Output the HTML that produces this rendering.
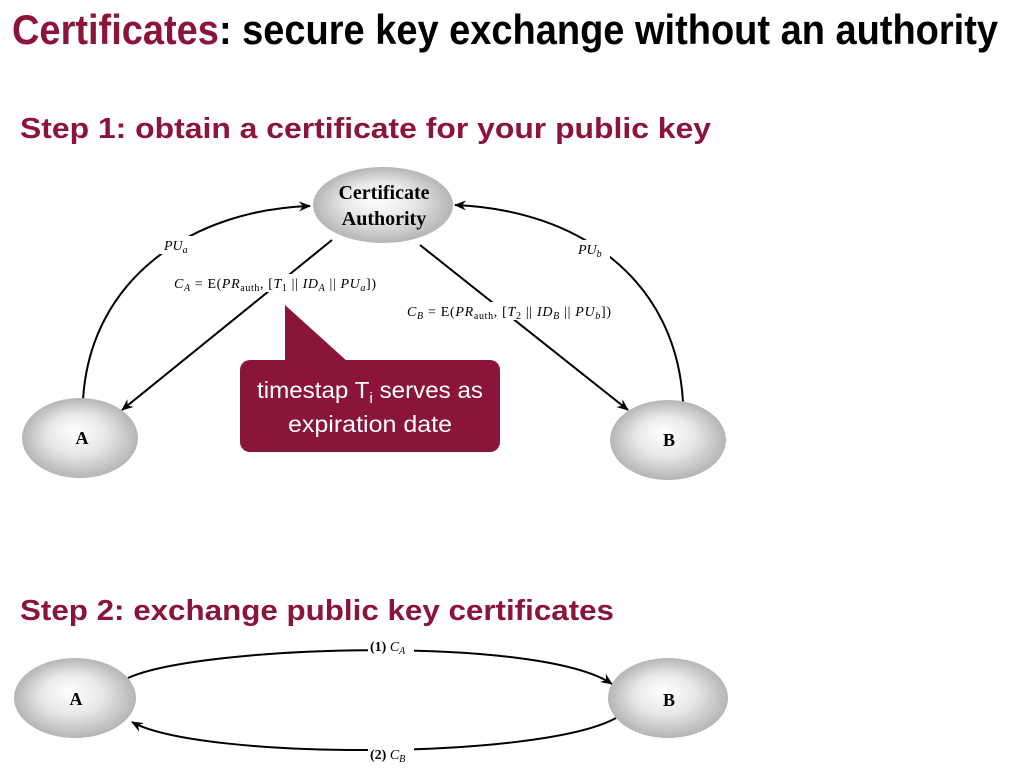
<!DOCTYPE html>
<html><head><meta charset="utf-8"><style>
html,body{margin:0;padding:0;background:#fff;width:1011px;height:772px;overflow:hidden}
svg{display:block}
</style></head><body>
<svg width="1011" height="772" viewBox="0 0 1011 772" xmlns="http://www.w3.org/2000/svg">
<defs>
<radialGradient id="g" cx="0.5" cy="0.5" r="0.5" fx="0.45" fy="0.4">
<stop offset="0" stop-color="#ffffff"/><stop offset="0.5" stop-color="#e8e8e8"/><stop offset="1" stop-color="#b5b5b5"/>
</radialGradient>
<marker id="ar" markerWidth="12" markerHeight="10" refX="11" refY="5" orient="auto" markerUnits="userSpaceOnUse">
<path d="M0,0 L12,5 L0,10 L4,5 Z" fill="#000"/>
</marker>
</defs>
<g font-family="Liberation Sans, sans-serif" font-weight="bold">
<text x="12" y="44" font-size="42" textLength="986" lengthAdjust="spacingAndGlyphs"><tspan fill="#8b1538">Certificates</tspan><tspan fill="#000">: secure key exchange without  an authority</tspan></text>
<text x="20" y="138" font-size="29" fill="#8b1538" textLength="691" lengthAdjust="spacingAndGlyphs">Step 1: obtain a certificate for your public key</text>
<text x="20" y="620" font-size="29" fill="#8b1538" textLength="594" lengthAdjust="spacingAndGlyphs">Step 2: exchange public key certificates</text>
</g>
<g fill="none" stroke="#000" stroke-width="2">
<path d="M83,400 C90,280 190,210 310,206" marker-end="url(#ar)"/>
<path d="M683,402 C676,280 580,210 455,205" marker-end="url(#ar)"/>
<path d="M332,240 L122,410" marker-end="url(#ar)"/>
<path d="M420,245 L628,410" marker-end="url(#ar)"/>
<path d="M128,678 C200,645 540,635 612,684" marker-end="url(#ar)"/>
<path d="M616,718 C540,760 200,760 132,722" marker-end="url(#ar)"/>
</g>
<g font-family="Liberation Serif, serif" font-style="italic" font-size="14">
<rect x="160" y="236" width="40" height="18" fill="#fff"/>
<text x="164" y="250">PU<tspan font-size="10" dy="3">a</tspan></text>
<rect x="574" y="240" width="36" height="18" fill="#fff"/>
<text x="578" y="254">PU<tspan font-size="10" dy="3">b</tspan></text>
<rect x="172" y="274" width="206" height="18" fill="#fff"/>
<text x="174" y="288" textLength="202" lengthAdjust="spacing">C<tspan font-size="10" dy="3">A</tspan><tspan dy="-3" font-style="normal"> = E(</tspan>PR<tspan font-size="10" dy="3" font-style="normal">auth</tspan><tspan dy="-3" font-style="normal">, [</tspan>T<tspan font-size="10" dy="3" font-style="normal">1</tspan><tspan dy="-3" font-style="normal"> || </tspan>ID<tspan font-size="10" dy="3">A</tspan><tspan dy="-3" font-style="normal"> || </tspan>PU<tspan font-size="10" dy="3">a</tspan><tspan dy="-3" font-style="normal">])</tspan></text>
<rect x="404" y="302" width="208" height="18" fill="#fff"/>
<text x="407" y="316" textLength="204" lengthAdjust="spacing">C<tspan font-size="10" dy="3">B</tspan><tspan dy="-3" font-style="normal"> = E(</tspan>PR<tspan font-size="10" dy="3" font-style="normal">auth</tspan><tspan dy="-3" font-style="normal">, [</tspan>T<tspan font-size="10" dy="3" font-style="normal">2</tspan><tspan dy="-3" font-style="normal"> || </tspan>ID<tspan font-size="10" dy="3">B</tspan><tspan dy="-3" font-style="normal"> || </tspan>PU<tspan font-size="10" dy="3">b</tspan><tspan dy="-3" font-style="normal">])</tspan></text>
<rect x="368" y="638" width="46" height="16" fill="#fff"/>
<text x="370" y="651"><tspan font-style="normal" font-weight="bold">(1)</tspan> C<tspan font-size="10" dy="3">A</tspan></text>
<rect x="368" y="746" width="46" height="16" fill="#fff"/>
<text x="370" y="759"><tspan font-style="normal" font-weight="bold">(2)</tspan> C<tspan font-size="10" dy="3">B</tspan></text>
</g>
<ellipse cx="383" cy="205" rx="70" ry="38" fill="url(#g)"/>
<ellipse cx="80" cy="438" rx="58" ry="40" fill="url(#g)"/>
<ellipse cx="668" cy="440" rx="58" ry="40" fill="url(#g)"/>
<ellipse cx="75" cy="698" rx="61" ry="40" fill="url(#g)"/>
<ellipse cx="668" cy="698" rx="60" ry="40" fill="url(#g)"/>
<g font-family="Liberation Serif, serif" font-weight="bold" text-anchor="middle">
<text x="384" y="199" font-size="20">Certificate</text>
<text x="384" y="225" font-size="20">Authority</text>
<text x="82" y="444" font-size="18">A</text>
<text x="669" y="446" font-size="18">B</text>
<text x="76" y="705" font-size="18">A</text>
<text x="669" y="706" font-size="18">B</text>
</g>
<path d="M285,305 L285,362 L348,362 Z" fill="#8b1538"/>
<rect x="240" y="360" width="260" height="92" rx="10" fill="#8b1538"/>
<g font-family="Liberation Sans, sans-serif" font-size="23" fill="#fff" text-anchor="middle">
<text x="370" y="398" textLength="226" lengthAdjust="spacingAndGlyphs">timestap T<tspan font-size="15" dy="5">i</tspan><tspan dy="-5"> serves as</tspan></text>
<text x="370" y="432" textLength="164" lengthAdjust="spacingAndGlyphs">expiration date</text>
</g>
</svg>
</body></html>
